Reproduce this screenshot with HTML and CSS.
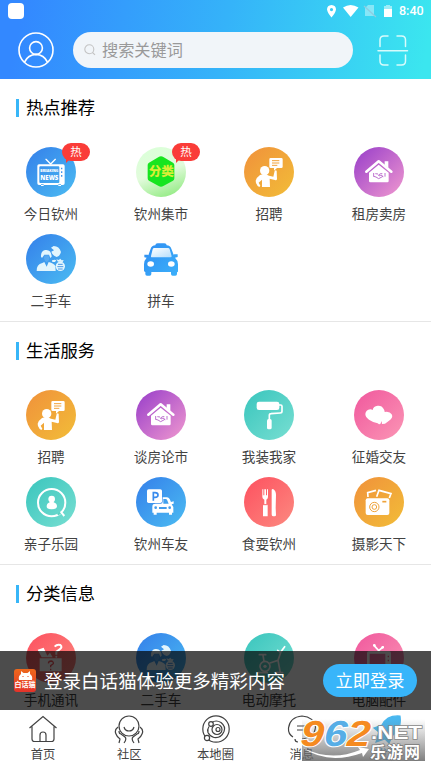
FILE: index.html
```html
<!DOCTYPE html>
<html lang="zh-CN">
<head>
<meta charset="utf-8">
<title>首页</title>
<link rel="stylesheet" href="styles.css">
</head>
<body>
<svg class="defs" width="0" height="0" aria-hidden="true">
  <defs>
    <linearGradient id="taxi-fill" x1="0" y1="0" x2="1" y2="1"><stop offset="0" stop-color="#2f8df2"/><stop offset="1" stop-color="#3bb0fa"/></linearGradient>
    <linearGradient id="glass" x1="0" y1="0" x2="1" y2="1"><stop offset="0" stop-color="#fff"/><stop offset="1" stop-color="#b5defc"/></linearGradient>
  </defs>
  <symbol id="news" viewBox="0 0 150 150">
    <path d="M60 37l14 14 14-14" fill="none" stroke="#fff" stroke-width="4" stroke-linecap="round"/>
    <path fill="#fff" fill-rule="evenodd" d="M39 52h72q5 0 5 5v52q0 5-5 5H39q-5 0-5-5V57q0-5 5-5zm4 6q-3 0-3 3v44q0 3 3 3h54q3 0 3-3V61q0-3-3-3zM45 112h8v5h-8zM97 112h8v5h-8z"/>
    <path d="M107 62v5M107 73v5M107 84v5" stroke="#4296ed" stroke-width="4"/>
    <text class="news-small" x="43" y="76" textLength="54" lengthAdjust="spacingAndGlyphs">BREAKING</text>
    <text class="news-big" x="43" y="98" textLength="54" lengthAdjust="spacingAndGlyphs">NEWS</text>
  </symbol>
  <symbol id="classify" viewBox="0 0 150 150">
    <path d="M75 28q4 0 7 2l29 17q4 3 4 7v40q0 5-4 7l-29 16q-7 4-14 0l-29-16q-4-2-4-7V54q0-4 4-7l29-17q3-2 7-2z" fill="#17e51f"/>
    <text class="classify-text" x="38" y="87" textLength="76" lengthAdjust="spacingAndGlyphs">分类</text>
  </symbol>
  <symbol id="recruit" viewBox="0 0 150 150">
    <circle cx="62" cy="71" r="14" fill="#fff"/>
    <path fill="#fff" d="M80 33h32q4 0 4 4v22q0 4-4 4H99l-9 8v-8H80q-4 0-4-4V37q0-4 4-4z"/>
    <path d="M84 41h22M84 48h22M84 55h16" stroke="#f2a33b" stroke-width="3"/>
    <path fill="#fff" d="M48 84q14-5 27 2l13 3 4-17q4-5 6 0l1 24q-1 5-6 3l-16-4 1 25H54V98l-10 9 5 9-3 4-5-3q-7-10-6-16 3-10 13-17z"/>
  </symbol>
  <symbol id="house" viewBox="0 0 150 150">
    <path d="M37 74l37-31 38 31" fill="none" stroke="#fff" stroke-width="8" stroke-linejoin="round" stroke-linecap="round"/>
    <path fill="#fff" d="M92 43h11v20l-11-8zM45 77l29-24 30 24v25q0 4-4 4H49q-4 0-4-4z"/>
    <path d="M59 78v11M93 78v11M59 88l7 2 8 5 13-7M64 80l8 1M72 86l7-6 6 0M75 87l6-3 7 5" fill="none" stroke="#bd70cf" stroke-width="3"/>
  </symbol>
  <symbol id="couple" viewBox="0 0 150 150">
    <path d="M32 111q-1-19 17-24l6-3 7 14 6-14q16 4 20 12l1 15zM87 84l-8 0-1-5 8-2 5 2z"/>
    <path d="M45 68q-1-17 12-20 19-3 20 20l-4 4-4-10H55l-7 10zM75 41l8-5q17 0 22 18-3 13-13 15-13-4-16-16l8-4z"/>
    <path d="M55 64h13l2 8q-2 11-8 12-6-2-8-11z" opacity=".15"/>
    <circle cx="103" cy="97" r="14"/><path d="M96 83l-5-7 7 2 5-4 4 5 6-1-3 6z"/>
    <path d="M96 91h14M94 98h18M96 105h14" fill="none" stroke="#4a98e6" stroke-width="3"/>
  </symbol>
  <symbol id="taxi" viewBox="0 0 150 150">
    <path fill="url(#taxi-fill)" d="M58 34q0-6 7-6h20q7 0 7 6 11 1 14 10l7 18 2-1h10v8l-8 2q9 8 9 20v21q0 3-3 3v5q0 5-5 5h-8q-5 0-5-5v-6H46v6q0 5-5 5h-8q-5 0-5-5v-6q-4-1-4-4V91q0-12 8-20l-7-1v-8h10l2 2 7-20q3-9 14-10z"/>
    <path fill="url(#glass)" d="M55 42h41q4 0 5 4l6 21q0 3-4 3H49q-5 0-4-4l5-20q1-4 5-4z"/>
    <ellipse cx="44" cy="90" rx="10" ry="8" fill="#fff"/><ellipse cx="106" cy="90" rx="10" ry="8" fill="#fff"/>
  </symbol>
  <symbol id="roller" viewBox="0 0 150 150">
    <rect x="38" y="35" width="68" height="25" rx="7" fill="#fff"/>
    <path d="M104 45h6q4 0 4 4v15q0 5-5 5l-28 2q-5 0-5 5v14" fill="none" stroke="#fff" stroke-width="5"/>
    <rect x="69" y="87" width="14" height="31" rx="5" fill="#fff"/>
  </symbol>
  <symbol id="love" viewBox="0 0 150 150">
    <path fill="#fff" d="M71 100q-14-3-26-11-11-8-11-17 1-12 15-14 4 0 7 2 2-12 15-13 13-1 18 10 3 4 3 9 15-3 21 7 5 9-4 16l-16 12-9 1-1-9-4 9-4 1z"/>
  </symbol>
  <symbol id="child" viewBox="0 0 150 150">
    <circle cx="77" cy="77" r="41" fill="none" stroke="#fff" stroke-width="6"/>
    <path d="M106 106l9 11" stroke="#fff" stroke-width="6"/><path d="M95 113l8-6" stroke="#59d1c4" stroke-width="7"/>
    <circle cx="77" cy="66" r="10" fill="#fff"/><path fill="#fff" d="M71 70h12v6q10 3 10 12 0 9-16 9t-15-9q0-9 9-12z"/>
  </symbol>
  <symbol id="parking" viewBox="0 0 150 150">
    <path fill="#fff" fill-rule="evenodd" d="M64 61h29q5 0 8 5l4 9 8-2v7l-6 2 5 8v17h-4v6h-9v-6H62v6h-9v-6h-4V89q0-9 8-9zm18 5v14h16l-5-12q-1-2-4-2z"/>
    <rect x="31" y="35" width="49" height="45" rx="6" fill="#3e91ed"/>
    <rect x="33" y="37" width="45" height="41" rx="5" fill="#fff"/>
    <path d="M52 71V47h5q9 0 9 7t-9 7h-5" fill="none" stroke="#398bed" stroke-width="5"/>
    <circle cx="59" cy="92" r="4" fill="#429cec"/><circle cx="101" cy="92" r="4" fill="#429cec"/><path d="M69 90h23v6H69z" fill="#429cec"/>
  </symbol>
  <symbol id="food" viewBox="0 0 150 150">
    <path fill="#fff" d="M55 37h3v18h3V37h5v18h3V37h3v23q0 5-5 8v13l4 3v34H57V84l4-3V68q-6-3-6-8zM83 112V39q0-3 4-3 9 5 9 18l-1 39 1 21q0 4-4 4h-5q-4 0-4-6z"/>
    <path d="M57 83h13" stroke="#fc686b" stroke-width="3"/>
  </symbol>
  <symbol id="camera" viewBox="0 0 150 150">
    <path d="M42 60l-1-13 25-7M68 59l7-19 36 10-5 13" fill="none" stroke="#fff" stroke-width="5"/>
    <rect x="35" y="64" width="71" height="50" rx="6" fill="#fff"/>
    <circle cx="61" cy="90" r="14" fill="#fff" stroke="#efa33a" stroke-width="3"/><circle cx="61" cy="90" r="7" fill="none" stroke="#efa33a" stroke-width="3"/><path d="M85 74h12" stroke="#efa33a" stroke-width="5"/>
  </symbol>
  <symbol id="gift" viewBox="0 0 150 150">
    <path fill="#fff" d="M41 76h66v39H41zM35 50l18-6 11 24 8-9 8 14H47z"/>
    <path d="M86 41q7-8 17-5 8 7-3 14l-9 6v9" fill="none" stroke="#fff" stroke-width="6"/><circle cx="91" cy="71" r="3" fill="#fff"/>
    <path d="M67 91q1-7 8-7 8 1 7 8l-8 6v5M74 107v5" fill="none" stroke="#f05b62" stroke-width="4"/>
  </symbol>
  <symbol id="bike" viewBox="0 0 150 150">
    <circle cx="63" cy="100" r="15" fill="none" stroke="#fff" stroke-width="5"/><circle cx="63" cy="100" r="5" fill="#fff"/>
    <path d="M46 65h19M57 66l3 19M78 90l24-8 9-26 11-15M109 58l-8-6M102 82l7 37M44 119h26M94 119h22" fill="none" stroke="#fff" stroke-width="5" stroke-linecap="round"/>
  </symbol>
  <symbol id="tv" viewBox="0 0 150 150">
    <path d="M60 37l14 16 13-11" fill="none" stroke="#fff" stroke-width="5" stroke-linecap="round"/><circle cx="61" cy="37" r="4" fill="#fff"/><circle cx="86" cy="43" r="4" fill="#fff"/>
    <path fill="#fff" fill-rule="evenodd" d="M44 55h62q5 0 5 5v50q0 5-5 5H44q-5 0-5-5V60q0-5 5-5zm3 7v45h47V62z"/><path d="M103 68v5M103 80v5" stroke="#f7668c" stroke-width="4"/>
  </symbol>
</svg>

<div class="phone">
  <header class="header">
    <div class="status">
      <span class="status-app"></span>
      <svg class="status-icons" viewBox="0 0 66 14">
        <path fill="#fff" fill-rule="evenodd" d="M4.500 0q4.500.3 4.500 4.600Q8.500 8 4.500 12.500.500 8 0 4.600 0 .3 4.500 0zm0 3a1.600 1.600 0 1 0 0 3.200 1.600 1.600 0 0 0 0-3.200z"/>
        <path fill="#fff" d="M16 2.500q7.500-5 15.500 0L23.700 12z"/>
        <path fill="#fff" opacity=".4" d="M38 3l3-3h6v11h-9z"/><path d="M37 1l12 11" stroke="#8dcce0" stroke-width="1.200"/>
        <path fill="#fff" opacity=".5" d="M57 1h2V0h4v1h2v3h-8z"/><path fill="#fff" d="M57 4h8v8h-8z"/>
      </svg>
      <span class="status-time">8:40</span>
    </div>
    <div class="topbar">
      <svg class="avatar" viewBox="0 0 36 36" fill="none" stroke="#fff" stroke-width="1.600"><circle cx="18" cy="18" r="17"/><circle cx="18" cy="16" r="6.400"/><path d="M6.500 30.200q3.500-7.500 11.500-7.800 8 .3 11.500 7.800"/></svg>
      <div class="search">
        <svg class="search-icon" viewBox="0 0 12 12" fill="none" stroke="#c3c3c3" stroke-width="1.100"><circle cx="5.300" cy="5.300" r="4.500"/><path d="M8.500 8.500l2.500 2.300"/></svg>
        <span>搜索关键词</span>
      </div>
      <svg class="scan" viewBox="0 0 32 32" fill="none" stroke="#d8fbfb" stroke-width="1.500" stroke-linecap="round"><path d="M3 12.500V6q0-4 4-4h4M20 2h4.500q4 0 4 4v6.500M3 21v6q0 4 4 4h4M20 31h4.500q4 0 4-4v-6M1 16.800h29.500"/></svg>
    </div>
  </header>

  <main class="content">
    <section class="section">
      <h2 class="title">热点推荐</h2>
      <div class="grid">
        <div class="item"><div class="disc blue"><svg><use href="#news"/></svg><span class="badge">热</span></div><span>今日钦州</span></div>
        <div class="item"><div class="disc lime"><svg><use href="#classify"/></svg><span class="badge">热</span></div><span>钦州集市</span></div>
        <div class="item"><div class="disc orange"><svg><use href="#recruit"/></svg></div><span>招聘</span></div>
        <div class="item"><div class="disc purple"><svg><use href="#house"/></svg></div><span>租房卖房</span></div>
        <div class="item"><div class="disc blue"><svg class="pale"><use href="#couple"/></svg></div><span>二手车</span></div>
        <div class="item"><div class="disc"><svg><use href="#taxi"/></svg></div><span>拼车</span></div>
      </div>
    </section>
    <section class="section">
      <h2 class="title">生活服务</h2>
      <div class="grid">
        <div class="item"><div class="disc orange"><svg><use href="#recruit"/></svg></div><span>招聘</span></div>
        <div class="item"><div class="disc purple"><svg><use href="#house"/></svg></div><span>谈房论市</span></div>
        <div class="item"><div class="disc teal"><svg><use href="#roller"/></svg></div><span>我装我家</span></div>
        <div class="item"><div class="disc pink"><svg><use href="#love"/></svg></div><span>征婚交友</span></div>
        <div class="item"><div class="disc teal"><svg><use href="#child"/></svg></div><span>亲子乐园</span></div>
        <div class="item"><div class="disc blue"><svg><use href="#parking"/></svg></div><span>钦州车友</span></div>
        <div class="item"><div class="disc red"><svg><use href="#food"/></svg></div><span>食耍钦州</span></div>
        <div class="item"><div class="disc orange"><svg><use href="#camera"/></svg></div><span>摄影天下</span></div>
      </div>
    </section>
    <section class="section">
      <h2 class="title">分类信息</h2>
      <div class="grid">
        <div class="item"><div class="disc red"><svg><use href="#gift"/></svg></div><span>手机通讯</span></div>
        <div class="item"><div class="disc blue"><svg class="pale"><use href="#couple"/></svg></div><span>二手车</span></div>
        <div class="item"><div class="disc teal"><svg><use href="#bike"/></svg></div><span>电动摩托</span></div>
        <div class="item"><div class="disc pink"><svg><use href="#tv"/></svg></div><span>电脑配件</span></div>
      </div>
    </section>
    <div class="login">
      <div class="logo">
        <svg class="logo-cat" viewBox="0 0 22 11"><path fill="#fff" d="M5 11Q4 7 7 5l0-3 2.500 2h4L16 2v3q3 2 2 6z"/><path d="M9 7v1M14 7v1" stroke="#e8471d" stroke-width="1"/></svg>
        <span class="logo-text">白话猫</span>
      </div>
      <span class="login-text">登录白话猫体验更多精彩内容</span>
      <span class="login-button">立即登录</span>
    </div>
  </main>

  <nav class="tabs">
    <div class="tab"><svg viewBox="0 0 30 30"><path d="M1.500 13L15 1.500 28.500 13M4 11.500V24q0 2.500 2.500 2.500h17q2.500 0 2.500-2.500V11.500M12 26v-6q0-3 3-3t3 3v6"/></svg><span>首页</span></div>
    <div class="tab"><svg viewBox="0 0 30 30"><circle cx="15" cy="11" r="10"/><path d="M10 12q1 4 5 4t5-4M4 12q-4 3-2 7 1 3 4 5l-1 4M26 12q4 3 2 7-1 3-4 5l1 4M5 16q0 3 2 3l4 3q2 2-1 6M25 16q0 3-2 3l-4 3q-2 2 1 6"/></svg><span>社区</span></div>
    <div class="tab"><svg viewBox="0 0 30 30"><circle cx="15" cy="14" r="13.200"/><path d="M11 7.500q4-3 9 0 5 4 3 9-3 7-10 6-4-1-6-5-1-3 1-6"/><circle cx="16" cy="14.500" r="5"/><circle cx="17" cy="14.500" r="2"/><circle cx="10" cy="9" r="2.300"/><circle cx="6" cy="23" r="2.600" class="dot"/></svg><span>本地圈</span></div>
    <div class="tab"><svg viewBox="0 0 30 30"><path d="M6 22Q1 19 1.500 13 3 2 15 1q12 1 13.500 11-1 11-13.500 12M10 11h11M10 15h11M8 24q0 3 3 3"/></svg><span>消息</span></div>
    <div class="tab active"><svg viewBox="0 0 30 30"><path d="M27 1Q14 0 9 10l-8 3 5 4-3 10 9-3 4 4 4-8Q29 14 27 1z"/></svg><span>发现</span></div>
    <svg class="mark" viewBox="0 0 131 46">
      <defs><linearGradient id="mark-bg" x1="0" y1="0" x2="0" y2="1"><stop offset="0" stop-color="#777" stop-opacity="0"/><stop offset="1" stop-color="#686868" stop-opacity=".85"/></linearGradient></defs>
      <rect x="7" y="3" width="123" height="42" fill="url(#mark-bg)"/>
      <path d="M8 32q28 14 57 2l-2-3 11 2-6 8-1-4Q33 49 8 32z" fill="#fff"/>
      <text class="mark-number" x="7" y="30" transform="skewX(-4)" textLength="70" lengthAdjust="spacingAndGlyphs"><tspan class="warm">9</tspan><tspan class="cool">6</tspan><tspan class="warm">2</tspan></text>
      <text class="mark-net" x="76" y="22.500" textLength="51" lengthAdjust="spacingAndGlyphs">.NET</text>
      <text class="mark-cn" x="75" y="42" textLength="50">乐游网</text>
    </svg>
  </nav>
</div>
</body>
</html>
```
FILE: styles.css
```css
* { box-sizing: border-box; }
body { margin: 0; font-family: "Noto Sans CJK SC", sans-serif; background: #fff; }
.defs { position: absolute; }
.phone { width: 431px; height: 767px; display: flex; flex-direction: column; overflow: hidden; }

.header { height: 79px; flex: none; background: linear-gradient(100deg, #3388ff 5%, #35b3f9 52%, #3be6ef 98%); }
.status { height: 22px; display: flex; align-items: center; padding: 0 7px 0 8px; }
.status-app { width: 16px; height: 16px; border-radius: 4px; background: #fff; margin-right: auto; }
.status-icons { width: 66px; height: 14px; margin: 2px 6px 0 0; }
.status-time { font: 500 12.500px/22px Roboto, sans-serif; color: #fff; width: 25px; white-space: nowrap; }
.topbar { display: flex; align-items: center; padding: 10px 22px 0 18px; }
.avatar { width: 36px; height: 36px; margin-right: 19px; }
.search { width: 280px; height: 36px; border-radius: 18px; background: #f1f5f9; display: flex; align-items: center; gap: 6px; padding: 0 11px; color: #999; font-size: 16.200px; line-height: 34px; }
.search span { height: 36px; }
.search-icon { width: 12px; height: 12px; }
.scan { width: 32px; height: 32px; margin-left: auto; }

.content { flex: 1; min-height: 0; overflow: hidden; position: relative; }
.section { height: 243px; padding-top: 20px; border-bottom: 1px solid #e6e6e6; }
.title { margin: 0 0 30px 16px; height: 18px; line-height: 16px; border-left: 3px solid #38b6f8; padding-left: 7px; font-size: 17.300px; font-weight: 400; color: #000; }
.grid { display: grid; grid-template-columns: 110px 110px 106px 114px; margin-left: -4px; row-gap: 6.500px; }
.item { height: 80px; display: flex; flex-direction: column; align-items: center; font-size: 13.600px; line-height: 20px; color: #424242; gap: 6px; }
.disc { width: 50px; height: 50px; border-radius: 50%; position: relative; flex: none; }
.disc svg { width: 50px; height: 50px; display: block; fill: #fff; }
.disc svg.pale { fill: #e2f5fd; }
.blue { background: linear-gradient(135deg, #347fea, #4bbcf2); }
.lime { background: linear-gradient(160deg, #dcffd9 15%, #e2fbdc 50%, #8eea7e 95%); }
.orange { background: linear-gradient(135deg, #f0913b, #f2bd38); }
.purple { background: linear-gradient(135deg, #a046ca 10%, #ec94cf 95%); }
.teal { background: linear-gradient(135deg, #39c5bd, #78dfd2); }
.pink { background: linear-gradient(135deg, #f0579d, #fb96b5); }
.red { background: linear-gradient(135deg, #fd505f, #fc8a80); }
.news-small { font: 800 10px "Open Sans", sans-serif; }
.news-big { font: 800 18px "Open Sans", sans-serif; }
.classify-text { font: 900 37px "Noto Sans CJK SC", sans-serif; fill: #d9ed37; }
.badge { position: absolute; left: 36px; top: -4px; width: 28px; height: 18px; border-radius: 9px; background: #fa3c38; color: #fff; font-size: 11.500px; line-height: 17px; text-align: center; }
.badge::after { content: ""; position: absolute; left: 4px; bottom: -2px; border-style: solid; border-width: 5px 5px 0 0; border-color: #fa3c38 transparent transparent; }

.login { position: absolute; left: 0; right: 0; bottom: 0; height: 59px; display: flex; align-items: center; padding: 0 14px; background: rgba(0, 0, 0, .7); color: #fff; }
.logo { width: 22px; height: 23px; border-radius: 3px; background: linear-gradient(#ed681c, #e4332a); display: flex; flex-direction: column; align-items: center; overflow: hidden; margin-right: 8px; flex: none; }
.logo-cat { width: 22px; height: 11px; flex: none; }
.logo-text { font-size: 7px; line-height: 8px; font-weight: 700; white-space: nowrap; }
.login-text { font-size: 18.550px; white-space: nowrap; line-height: 28px; padding-bottom: 2px; }
.login-button { margin-left: auto; width: 94px; height: 33px; border-radius: 17px; background: #38b5fa; text-align: center; font-size: 17.200px; line-height: 32px; }

.tabs { height: 57px; flex: none; display: flex; position: relative; background: #fff; }
.tab { flex: 1; display: flex; flex-direction: column; align-items: center; padding-top: 5px; font-size: 12.300px; line-height: 18px; color: #424242; }
.tab svg { width: 30px; height: 30px; fill: none; stroke: #424242; stroke-width: 1.200; }
.tab .dot { fill: #fff; }
.tab.active { color: #2f9fdf; }
.tab.active svg { fill: #49b7ef; stroke: #49b7ef; }
.mark { position: absolute; left: 295px; top: 6px; width: 131px; height: 46px; }
.mark-number { font: italic 700 36px "Liberation Sans", sans-serif; stroke: #fff; stroke-width: 2px; paint-order: stroke; }
.mark-number .warm { fill: #f58a1f; }
.mark-number .cool { fill: #57aee6; }
.mark-net { font: 700 19px "Liberation Sans", sans-serif; fill: #fff; stroke: #888; stroke-width: 1.500px; paint-order: stroke; }
.mark-cn { font: 700 16px "Noto Sans CJK SC", sans-serif; fill: #fff; stroke: #777; stroke-width: 1.500px; paint-order: stroke; }
```
